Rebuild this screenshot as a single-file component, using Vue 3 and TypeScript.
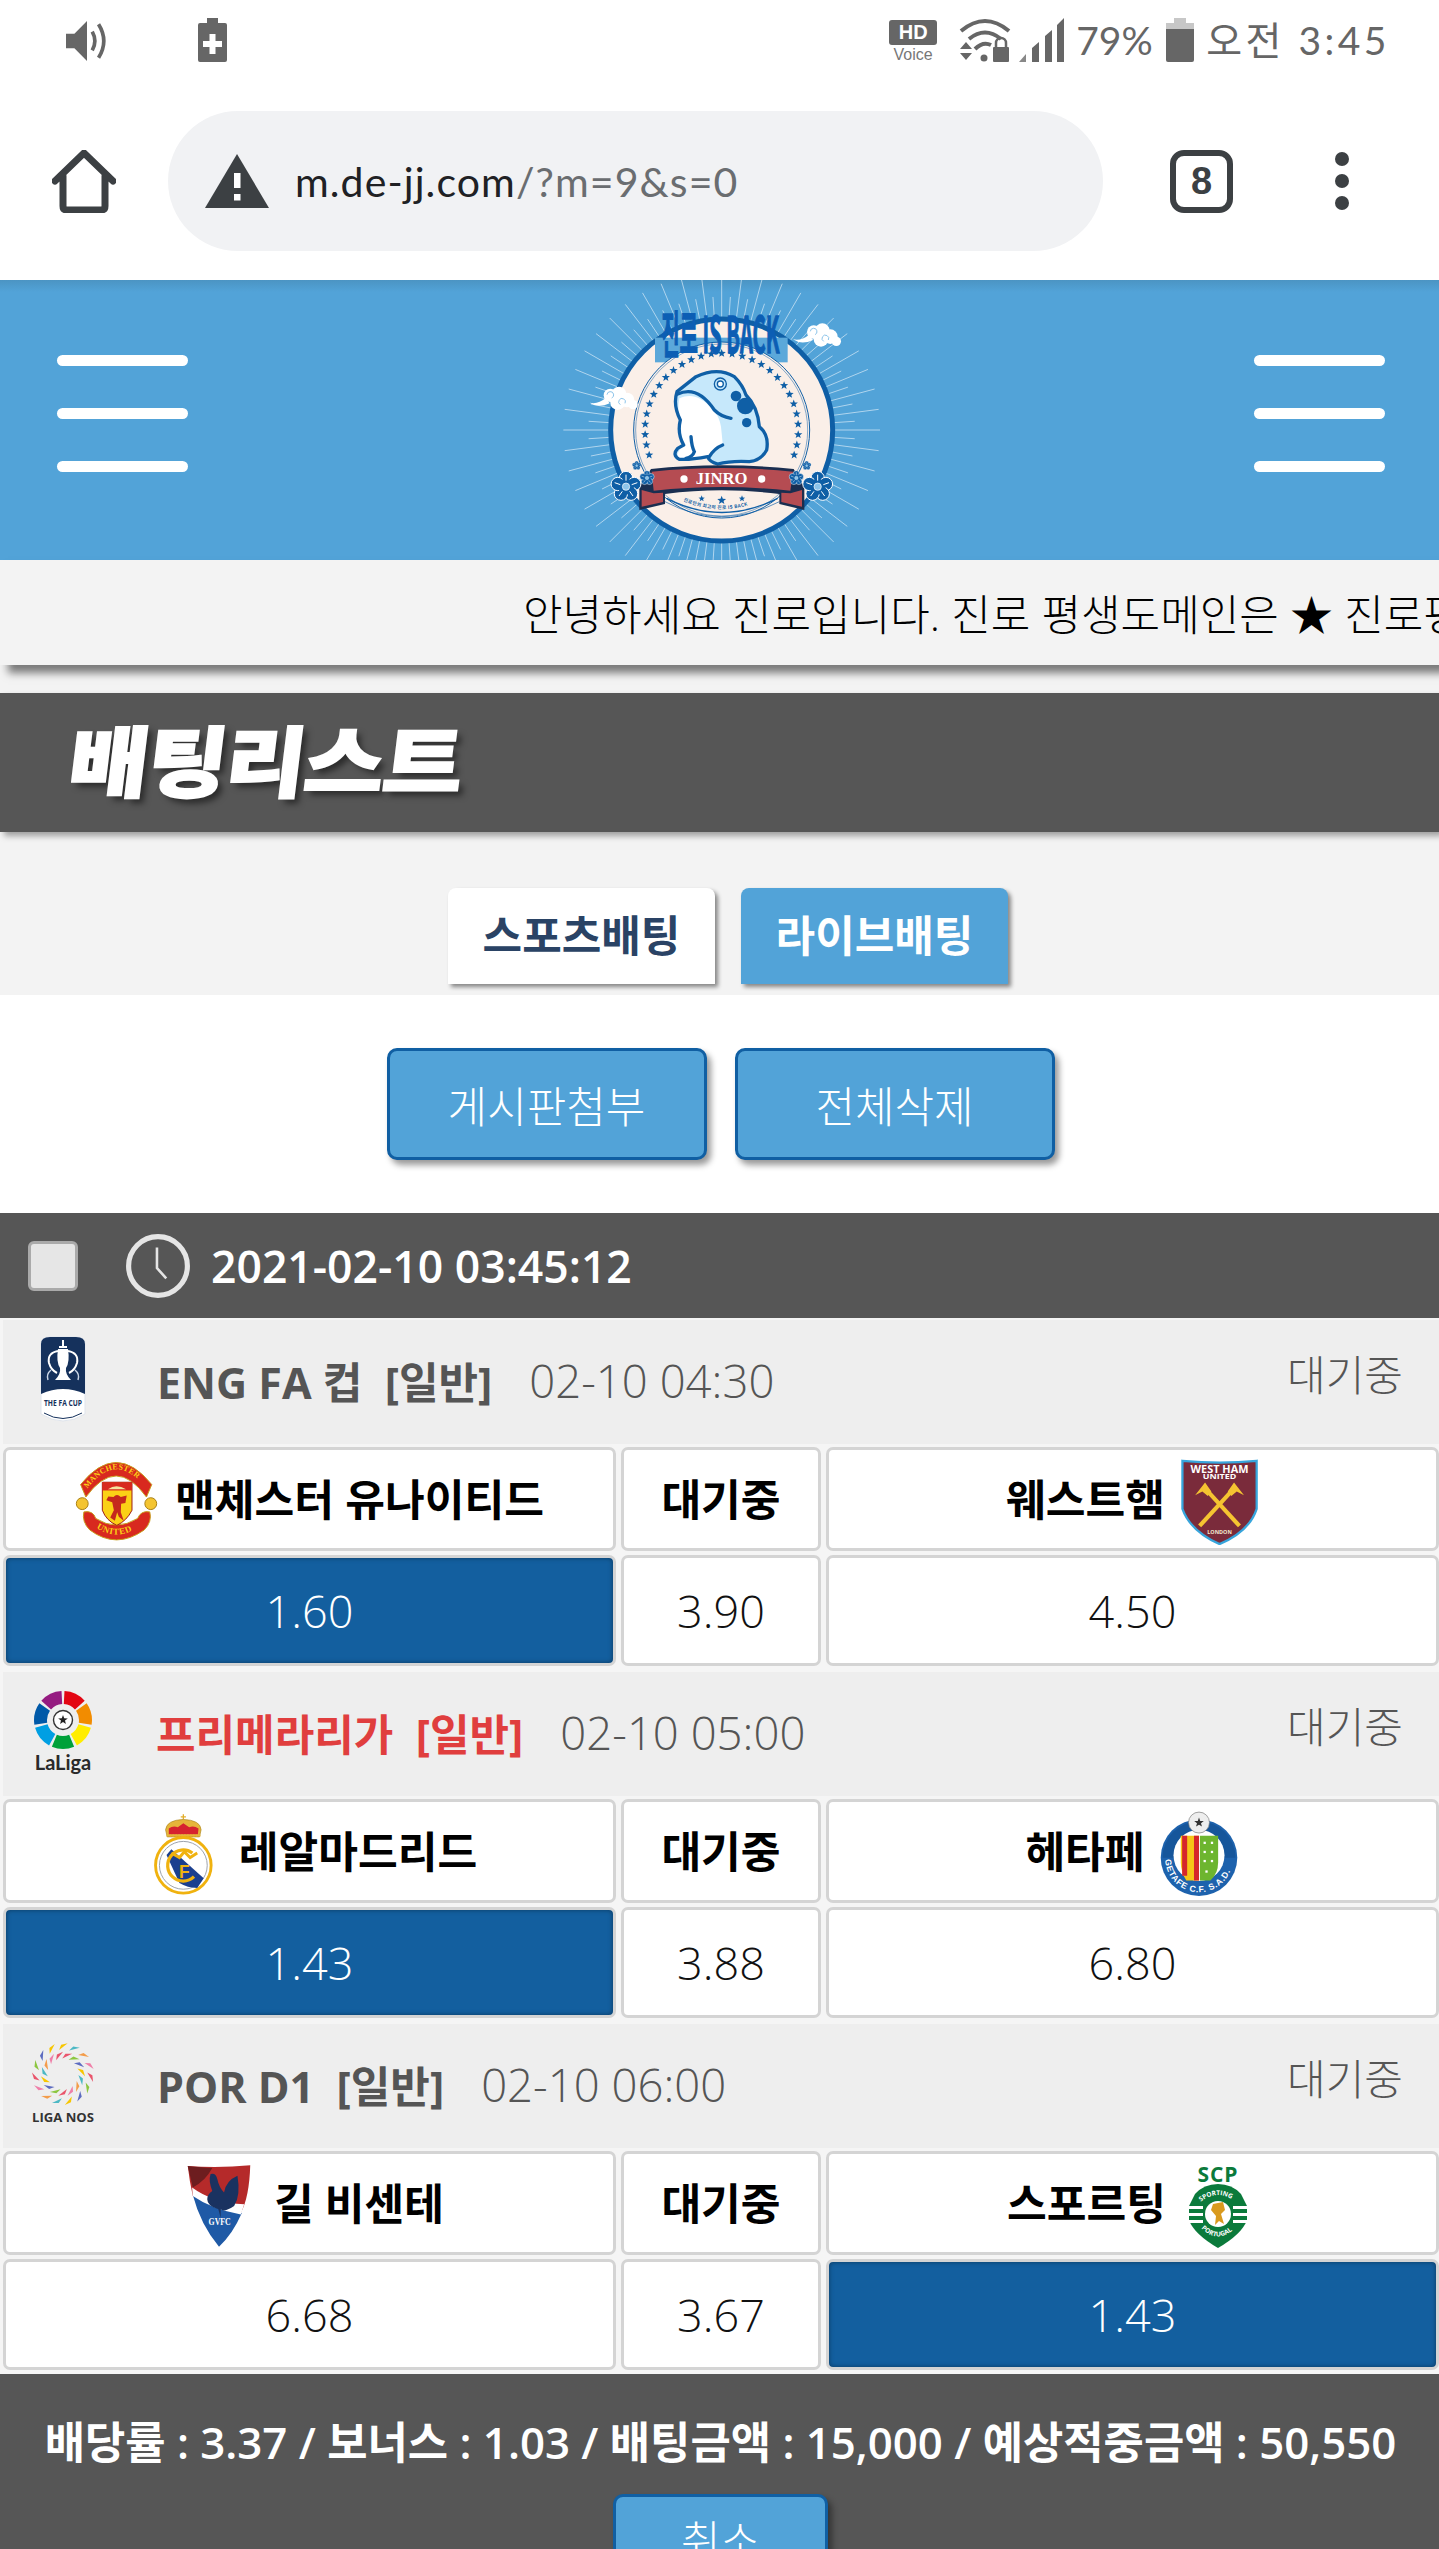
<script setup lang="ts">
interface Team { name: string; logo: string }
interface Match {
  icon: string
  league: string
  hot: boolean
  time: string
  home: Team
  away: Team
  odds: [string, string, string]
  picked: number
}

const matches: Match[] = [
  {
    icon: 'fa',
    league: 'ENG FA 컵',
    hot: false,
    time: '02-10 04:30',
    home: { name: '맨체스터 유나이티드', logo: 'mu' },
    away: { name: '웨스트햄', logo: 'wh' },
    odds: ['1.60', '3.90', '4.50'],
    picked: 0,
  },
  {
    icon: 'laliga',
    league: '프리메라리가',
    hot: true,
    time: '02-10 05:00',
    home: { name: '레알마드리드', logo: 'rm' },
    away: { name: '헤타페', logo: 'ge' },
    odds: ['1.43', '3.88', '6.80'],
    picked: 0,
  },
  {
    icon: 'nos',
    league: 'POR D1',
    hot: false,
    time: '02-10 06:00',
    home: { name: '길 비센테', logo: 'gv' },
    away: { name: '스포르팅', logo: 'sc' },
    odds: ['6.68', '3.67', '1.43'],
    picked: 2,
  },
]

function starPoints(cx: number, cy: number, r: number): string {
  const pts: string[] = []
  for (let i = 0; i < 10; i++) {
    const a = (i * Math.PI) / 5 - Math.PI / 2
    const d = i % 2 === 0 ? r : r * 0.42
    pts.push(`${(cx + d * Math.cos(a)).toFixed(1)},${(cy + d * Math.sin(a)).toFixed(1)}`)
  }
  return pts.join(' ')
}

const CX = 662
const CY = 480

const rays = Array.from({ length: 96 }, (_, i) => {
  const a = (i / 96) * Math.PI * 2
  const r2 = i % 2 === 0 ? 475 : 400
  return {
    x1: CX + 335 * Math.cos(a),
    y1: CY + 335 * Math.sin(a),
    x2: CX + r2 * Math.cos(a),
    y2: CY + r2 * Math.sin(a),
  }
})

const ringStars = Array.from({ length: 29 }, (_, i) => {
  const a = ((-109 + i * 7.786) * Math.PI) / 180
  return starPoints(CX + 230 * Math.sin(a), CY - 230 * Math.cos(a), 13)
})

const bottomStars = [starPoints(602, 686, 10), starPoints(662, 691, 14), starPoints(723, 686, 10)]

const petals = [0, 72, 144, 216, 288].map((d) => {
  const a = ((d - 90) * Math.PI) / 180
  return { x: 50 + 26 * Math.cos(a), y: 50 + 26 * Math.sin(a) }
})

const ligaColors = ['#e30613', '#f28c00', '#ffed00', '#00a13a', '#009fe3', '#0059a8', '#951b81']

const nosShards = Array.from({ length: 30 }, (_, i) => {
  const colors = ['#f7c600', '#e9546b', '#4cb8c4', '#8cc63f', '#f39c4a', '#5c6bc0', '#ef7fa8']
  const a = (i / 30) * Math.PI * 2 - Math.PI / 2
  const r = i % 2 === 0 ? 27 : 18
  const x = 33 + r * Math.cos(a)
  const y = 31 + r * Math.sin(a)
  const t = a + 0.9
  return {
    points: `${x + 6 * Math.cos(t)},${y + 6 * Math.sin(t)} ${x - 5 * Math.cos(t)},${y - 5 * Math.sin(t)} ${x + 3 * Math.sin(t)},${y - 3 * Math.cos(t)}`,
    fill: colors[i % 7],
  }
})
</script>

<template>
  <div class="page">
    <svg class="defs" aria-hidden="true">
      <defs>
        <symbol id="blossom" viewBox="0 0 100 100">
          <circle v-for="(p, i) in petals" :key="i" :cx="p.x" :cy="p.y" r="20" fill="#0f5fa6" stroke="#fff" stroke-width="3" />
          <circle cx="50" cy="50" r="24" fill="#0f5fa6" />
          <circle cx="50" cy="50" r="11" fill="#8cc4ea" stroke="#fff" stroke-width="2" />
          <g stroke="#fff" stroke-width="3">
            <line x1="50" y1="32" x2="50" y2="14" />
            <line x1="33" y1="44" x2="16" y2="38" />
            <line x1="67" y1="44" x2="84" y2="38" />
            <line x1="39" y1="64" x2="29" y2="78" />
            <line x1="61" y1="64" x2="71" y2="78" />
          </g>
        </symbol>

        <symbol id="cloud" viewBox="0 0 150 80">
          <g fill="#fff">
            <circle cx="62" cy="28" r="20" />
            <circle cx="88" cy="24" r="22" />
            <circle cx="112" cy="42" r="22" />
            <circle cx="130" cy="56" r="14" />
            <circle cx="84" cy="50" r="22" />
            <path d="M0 50 Q25 56 48 36 L60 52 Q25 68 0 50Z" />
          </g>
          <path d="M52 26 a10 10 0 1 1 14 10 M92 56 a10 10 0 1 1 14 -4" fill="none" stroke="#8cc4ea" stroke-width="3" />
        </symbol>

        <symbol id="fa" viewBox="0 0 46 86">
          <path d="M1 8 Q1 1 10 1 H36 Q45 1 45 8 V78 Q23 92 1 78Z" fill="#fff" stroke="#dfe4ec" />
          <path d="M1 8 Q1 1 10 1 H36 Q45 1 45 8 V58 Q23 48 1 58Z" fill="#15315c" />
          <path d="M23 4 V10 M19 11 H27" stroke="#fff" stroke-width="2" fill="none" />
          <path d="M18 13 H28 Q30 26 26 32 Q25 38 31 44 H15 Q21 38 20 32 Q16 26 18 13Z" fill="#fff" />
          <path d="M18 15 Q7 17 9 27 Q11 34 17 37 M28 15 Q39 17 37 27 Q35 34 29 37" fill="none" stroke="#fff" stroke-width="2" />
          <path d="M8 44 Q6 38 11 34 M38 44 Q40 38 35 34" fill="none" stroke="#c9d5e6" stroke-width="1.500" />
          <text x="23" y="70" text-anchor="middle" font-size="8" font-weight="700" font-family="Open Sans, sans-serif" fill="#15315c" textLength="38" lengthAdjust="spacingAndGlyphs">THE FA CUP</text>
          <path d="M4 77 Q23 88 42 77" fill="none" stroke="#15315c" stroke-width="1" />
        </symbol>

        <symbol id="laliga" viewBox="0 0 60 84">
          <g transform="rotate(-90 30 29)">
            <circle
              v-for="(c, i) in ligaColors"
              :key="c"
              cx="30"
              cy="29"
              r="22.500"
              fill="none"
              :stroke="c"
              stroke-width="13"
              pathLength="700"
              stroke-dasharray="88 612"
              :stroke-dashoffset="-i * 100 - 6"
            />
          </g>
          <circle cx="30" cy="29" r="9.500" fill="#fff" stroke="#333" stroke-width="1.400" />
          <polygon :points="starPoints(30, 29, 5)" fill="#222" />
          <text x="30" y="79" text-anchor="middle" font-size="20" font-weight="700" font-family="Lato, sans-serif" fill="#2a2a2a">LaLiga</text>
        </symbol>

        <symbol id="nos" viewBox="0 0 66 84">
          <polygon v-for="(s, i) in nosShards" :key="i" :points="s.points" :fill="s.fill" />
          <text x="33" y="79" text-anchor="middle" font-size="12" font-weight="700" font-family="Open Sans, sans-serif" fill="#333" textLength="62" lengthAdjust="spacingAndGlyphs">LIGA NOS</text>
        </symbol>

        <symbol id="mu" viewBox="55 35 255 260">
          <path d="M82 195 Q110 190 118 215 Q180 255 245 215 Q255 190 282 195 Q290 225 265 250 Q180 310 100 250 Q75 225 82 195Z" fill="#d8291f" stroke="#c79c1a" stroke-width="3" />
          <path d="M88 150 L72 112 Q180 -22 288 112 L272 150 Q180 22 88 150Z" fill="#d8291f" stroke="#c79c1a" stroke-width="3" />
          <circle cx="77" cy="170" r="18" fill="#f4c430" stroke="#a97f10" stroke-width="3" />
          <circle cx="285" cy="170" r="18" fill="#f4c430" stroke="#a97f10" stroke-width="3" />
          <path d="M138 105 H228 V190 Q212 222 182 236 Q150 222 138 190Z" fill="#fbd116" stroke="#9c1d14" stroke-width="3" />
          <path d="M138 105 H228 V130 H138Z" fill="#d8291f" />
          <path d="M155 126 Q180 108 210 126 Z" fill="#f4e3a0" />
          <path d="M172 150 Q182 138 194 150 L212 145 L208 168 L195 170 L194 196 L203 222 L188 210 L183 196 L176 222 L162 212 L173 190 L168 166 L150 160 L156 148Z" fill="#c5281d" />
          <path id="mu-arc-a" d="M88 130 Q180 2 276 130" fill="none" />
          <path id="mu-arc-b" d="M112 238 Q180 290 252 238" fill="none" />
          <text font-size="24" font-weight="700" font-family="Liberation Serif, serif" fill="#fbd116" letter-spacing="1"><textPath href="#mu-arc-a" startOffset="3%">MANCHESTER</textPath></text>
          <text font-size="27" font-weight="700" font-family="Liberation Serif, serif" fill="#fbd116" letter-spacing="2"><textPath href="#mu-arc-b" startOffset="6%">UNITED</textPath></text>
        </symbol>

        <symbol id="wh" viewBox="1000 360 170 190">
          <path d="M1002 364 Q1085 372 1166 364 V470 Q1150 520 1084 548 Q1020 520 1002 470Z" fill="#7a2b3b" stroke="#37a5dc" stroke-width="5" />
          <text x="1084" y="391" text-anchor="middle" font-size="22" font-weight="700" font-family="Open Sans, sans-serif" fill="#fff" textLength="128" lengthAdjust="spacingAndGlyphs">WEST HAM</text>
          <text x="1084" y="405" text-anchor="middle" font-size="16" font-weight="700" font-family="Open Sans, sans-serif" fill="#fff" textLength="74" lengthAdjust="spacingAndGlyphs">UNITED</text>
          <g stroke="#f5c431" stroke-width="9" fill="none">
            <line x1="1052" y1="425" x2="1128" y2="508" />
            <line x1="1116" y1="425" x2="1040" y2="508" />
          </g>
          <path d="M1030 440 L1052 412 L1066 432 L1058 442 L1046 432Z M1138 440 L1116 412 L1102 432 L1110 442 L1122 432Z" fill="#f5c431" />
          <text x="1084" y="525" text-anchor="middle" font-size="12" font-weight="700" font-family="Open Sans, sans-serif" fill="#f1e6d0">LONDON</text>
        </symbol>

        <symbol id="rm" viewBox="460 455 195 260">
          <path d="M557 462 V478 M549 470 H565" stroke="#e3ae2a" stroke-width="4" />
          <path d="M502 510 Q505 480 557 478 Q610 480 612 510 L607 532 H507Z" fill="#e6b53a" stroke="#a98218" stroke-width="2" />
          <path d="M512 506 Q525 496 540 502 L557 490 L575 502 Q590 496 604 506 L602 524 H512Z" fill="#d6232f" />
          <path d="M505 528 H610" stroke="#e6b53a" stroke-width="6" stroke-dasharray="6 3" />
          <circle cx="557" cy="620" r="86" fill="#fff" stroke="#f0b20f" stroke-width="9" />
          <circle cx="557" cy="620" r="74" fill="none" stroke="#9aa0aa" stroke-width="3" />
          <path d="M505 588 L520 570 L620 660 L600 690 Q570 690 545 675Z" fill="#1b3f8f" />
          <path d="M585 582 A48 48 0 1 0 590 655" fill="none" stroke="#f0b20f" stroke-width="10" />
          <path d="M520 582 L545 596 L560 578 L578 596 L600 582" fill="none" stroke="#f0b20f" stroke-width="9" />
          <text x="560" y="658" text-anchor="middle" font-size="54" font-weight="700" font-family="Liberation Sans, sans-serif" fill="#f0b20f">F</text>
        </symbol>

        <symbol id="ge" viewBox="950 1148 180 188">
          <circle cx="1040" cy="1250" r="84" fill="#1d62ad" />
          <path d="M960 1250 A80 80 0 0 1 1120 1250" fill="#0f4a8a" opacity=".5" />
          <circle cx="1040" cy="1245" r="56" fill="#fff" />
          <path d="M1000 1202 H1040 V1300 H1012 Q1000 1280 1000 1260Z" fill="#f5c518" />
          <path d="M1003 1202 H1014 V1290 H1003Z M1029 1202 H1040 V1300 H1029Z" fill="#d5262c" />
          <path d="M1042 1202 H1082 V1260 Q1082 1285 1065 1300 H1042Z" fill="#6db52f" />
          <g fill="#fff"><rect x="1050" y="1215" width="5" height="5" /><rect x="1066" y="1215" width="5" height="5" /><rect x="1050" y="1235" width="5" height="5" /><rect x="1066" y="1235" width="5" height="5" /><rect x="1050" y="1255" width="5" height="5" /><rect x="1066" y="1255" width="5" height="5" /><rect x="1054" y="1278" width="5" height="5" /></g>
          <circle cx="1040" cy="1173" r="23" fill="#eee" stroke="#777" stroke-width="1.500" />
          <polygon :points="starPoints(1040, 1173, 11)" fill="#333" />
          <path id="ge-arc" d="M966 1252 A74 74 0 0 0 1114 1252" fill="none" />
          <text font-size="19" font-weight="700" font-family="Liberation Sans, sans-serif" fill="#fff" letter-spacing="1.500"><textPath href="#ge-arc" startOffset="1%">GETAFE C.F. S.A.D.</textPath></text>
        </symbol>

        <symbol id="gv" viewBox="55 80 190 250">
          <path d="M57 86 Q150 92 243 84 Q240 180 215 225 L72 175 Q62 130 57 86Z" fill="#b52a2a" />
          <path d="M57 86 Q100 90 130 92 Q110 130 72 150Z" fill="#6d1d1f" />
          <path d="M72 172 Q140 205 218 226 Q190 290 150 326 Q95 260 72 172Z" fill="#1f5aa6" />
          <path d="M70 150 Q130 195 225 200 L215 230 Q130 215 72 175Z" fill="#fff" />
          <path d="M125 110 Q140 105 145 125 Q150 150 165 165 Q170 130 205 115 Q215 175 195 205 Q165 225 155 215 L155 240 L148 215 Q115 205 115 185 Q115 170 130 160 Q118 130 125 110Z" fill="#1a3260" />
          <text x="152" y="262" text-anchor="middle" font-size="30" font-family="Liberation Serif, serif" fill="#fff" textLength="66" lengthAdjust="spacingAndGlyphs">GVFC</text>
        </symbol>

        <symbol id="sc" viewBox="0 0 64 84">
          <text x="32" y="18" text-anchor="middle" font-size="21" font-weight="700" font-family="Open Sans, sans-serif" fill="#0b7a3b" letter-spacing="1">SCP</text>
          <path d="M32 20 Q46 20 55 30 L61 42 V56 Q56 70 32 84 Q8 70 3 56 V42 L9 30 Q18 20 32 20Z" fill="#0b7a3b" />
          <circle cx="32" cy="50" r="13" fill="#fff" />
          <g fill="#fff"><rect x="3" y="42" width="14" height="3" /><rect x="3" y="49" width="14" height="3" /><rect x="3" y="56" width="14" height="3" /><rect x="47" y="42" width="14" height="3" /><rect x="47" y="49" width="14" height="3" /><rect x="47" y="56" width="14" height="3" /></g>
          <path d="M27 40 L37 38 L39 46 L35 50 L38 60 L33 57 L29 61 L30 52 L25 46Z" fill="#d99a1e" />
          <path id="sc-top" d="M12 40 Q32 22 52 40" fill="none" />
          <path id="sc-bot" d="M14 63 Q32 82 50 63" fill="none" />
          <text font-size="6.500" font-weight="700" font-family="Open Sans, sans-serif" fill="#fff"><textPath href="#sc-top" startOffset="8%">SPORTING</textPath></text>
          <text font-size="6.500" font-weight="700" font-family="Open Sans, sans-serif" fill="#fff"><textPath href="#sc-bot" startOffset="4%">PORTUGAL</textPath></text>
        </symbol>
      </defs>
    </svg>

    <div class="status">
      <div class="status-left">
        <svg class="ic-speaker" viewBox="0 0 40 38">
          <path d="M0 12 H8 L20 0 V38 L8 26 H0Z" fill="#666" />
          <path d="M25 10 Q30 19 25 28 M31 3 Q41 19 31 35" fill="none" stroke="#666" stroke-width="3.500" />
        </svg>
        <svg class="ic-saver" viewBox="0 0 29 44">
          <path d="M9 0 H20 V5 H27 Q29 5 29 7 V42 Q29 44 27 44 H2 Q0 44 0 42 V7 Q0 5 2 5 H9Z" fill="#666" />
          <path d="M11.500 16 H17.500 V23 H24 V29 H17.500 V36 H11.500 V29 H5 V23 H11.500Z" fill="#fff" />
        </svg>
      </div>
      <div class="status-right">
        <div class="hd">
          <span class="hd-box">HD</span>
          <span class="hd-voice">Voice</span>
        </div>
        <svg class="ic-wifi" viewBox="0 0 52 44">
          <g fill="none" stroke="#666" stroke-width="4">
            <path d="M2 13 Q26 -7 50 13" />
            <path d="M10 21 Q26 8 42 21" />
            <path d="M16 31 Q24 23 32 27" />
          </g>
          <circle cx="25" cy="40" r="3.500" fill="#666" />
          <path d="M1 31 L7 24 L13 31Z M1 35 H13 L7 42Z" fill="#666" />
          <rect x="34" y="29" width="16" height="15" rx="1" fill="#666" />
          <path d="M37 30 V25 A5 5 0 0 1 47 25 V30" fill="none" stroke="#666" stroke-width="2.500" />
        </svg>
        <svg class="ic-signal" viewBox="0 0 45 44">
          <path d="M0 44 L7 36 V44Z" fill="#888" />
          <path d="M13 44 V30 L20 24 V44Z M26 44 V18 L33 12 V44Z M38 44 V7 L45 0 V44Z" fill="#666" />
        </svg>
        <span class="pct">79%</span>
        <svg class="ic-batt" viewBox="0 0 28 44">
          <path d="M8 0 H20 V5 H28 V11 H0 V5 H8Z" fill="#c7c7c7" />
          <path d="M0 11 H28 V42 Q28 44 26 44 H2 Q0 44 0 42Z" fill="#666" />
        </svg>
        <span class="clock-text">오전 3:45</span>
      </div>
    </div>

    <div class="toolbar">
      <svg class="ic-home" viewBox="0 0 64 63">
        <path d="M3 31 L32 3 L61 31 M11 26 V56 Q11 60 15 60 H49 Q53 60 53 56 V26" fill="none" stroke="#3c4043" stroke-width="7" stroke-linecap="round" stroke-linejoin="round" />
      </svg>
      <div class="url-pill">
        <svg class="ic-warn" viewBox="0 0 64 54">
          <path d="M32 0 L64 54 H0Z" fill="#3c4043" />
          <rect x="29" y="19" width="6.500" height="15" fill="#fff" />
          <rect x="29" y="40" width="6.500" height="6.500" fill="#fff" />
        </svg>
        <span class="url"><b>m.de-jj.com</b>/?m=9&amp;s=0</span>
      </div>
      <div class="tabs-count">8</div>
      <div class="dots"><i></i><i></i><i></i></div>
    </div>

    <header class="site-head">
      <div class="burger"><i></i><i></i><i></i></div>
      <svg class="brand" viewBox="0 30 1320 840">
        <g stroke="#cfe6f6" stroke-width="3" opacity=".75">
          <line v-for="(r, i) in rays" :key="i" :x1="r.x1" :y1="r.y1" :x2="r.x2" :y2="r.y2" />
        </g>
        <circle :cx="CX" :cy="CY" r="333" fill="#faefe8" stroke="#0f5fa6" stroke-width="15" />
        <rect x="462" y="203" width="398" height="74" fill="#5ba8da" />
        <circle :cx="CX" :cy="CY" r="264" fill="#faefe8" stroke="#0f5fa6" stroke-width="3" />
        <circle :cx="CX" :cy="CY" r="258" fill="none" stroke="#0f5fa6" stroke-width="1.500" />
        <polygon v-for="(s, i) in ringStars" :key="i" :points="s" fill="#0f5fa6" />
        <path d="M585 320 Q650 290 700 320 Q725 345 735 375 Q770 410 775 470 Q805 495 797 540 Q780 572 745 575 Q690 572 650 582 Q625 575 620 560 Q570 570 535 568 Q512 555 530 535 L548 525 Q528 490 538 450 Q515 405 528 365Z" fill="#c6e8fb" />
        <path d="M535 385 Q590 360 640 425 Q655 440 660 470 L665 520 Q640 545 625 560 Q570 565 535 565 Q520 555 548 525 Q528 490 538 450 Q528 420 535 385Z" fill="#fff" />
        <path d="M530 372 Q590 345 640 420 Q660 440 690 445 M570 500 Q572 530 580 545 Q575 560 555 565 M665 525 Q640 535 625 560" fill="none" stroke="#0f5fa6" stroke-width="10" stroke-linecap="round" />
        <path d="M585 320 Q650 290 700 320 Q725 345 735 375 Q770 410 775 470 Q805 495 797 540 Q780 572 745 575 Q690 572 650 582 Q625 575 620 560 Q570 570 535 568 Q512 555 530 535 L548 525 Q528 490 538 450 Q515 405 528 365Z" fill="none" stroke="#0f5fa6" stroke-width="10" stroke-linejoin="round" />
        <circle cx="705" cy="378" r="16" fill="#0f5fa6" />
        <circle cx="733" cy="408" r="25" fill="#0f5fa6" />
        <circle cx="737" cy="458" r="14" fill="#0f5fa6" />
        <circle cx="658" cy="342" r="18" fill="#c6e8fb" stroke="#0f5fa6" stroke-width="4" />
        <circle cx="658" cy="342" r="9" fill="#fff" stroke="#0f5fa6" stroke-width="4" />
        <path d="M497 685 Q662 770 830 685" fill="none" stroke="#0f5fa6" stroke-width="4" />
        <path d="M492 695 Q662 785 835 695" fill="none" stroke="#0f5fa6" stroke-width="2" />
        <polygon v-for="(s, i) in bottomStars" :key="'b' + i" :points="s" fill="#0f5fa6" />
        <path id="tag-arc" d="M540 690 Q662 745 785 690" fill="none" />
        <text font-size="14" font-weight="700" font-family="Noto Sans CJK KR, sans-serif" fill="#0f5fa6" letter-spacing="1"><textPath href="#tag-arc" startOffset="3%">진로만의 최고의 진로 IS BACK</textPath></text>
        <path d="M450 597 L415 650 V720 L492 702 V672 Q662 650 835 672 V702 L910 720 V650 L878 597 Q662 575 450 597Z" fill="#1a2e50" />
        <path d="M452 605 Q662 583 876 605 L868 662 Q662 640 458 662Z M422 660 L458 670 L486 668 V696 L422 710Z M868 670 L903 660 V710 L841 696 V668Z" fill="#b54c52" />
        <circle cx="549" cy="627" r="11" fill="#fff" />
        <circle cx="782" cy="627" r="11" fill="#fff" />
        <text x="662" y="642" text-anchor="middle" font-size="50" font-weight="700" font-family="Liberation Serif, serif" fill="#fff">JINRO</text>
        <use href="#blossom" x="325" y="600" width="100" height="100" />
        <use href="#blossom" x="900" y="600" width="100" height="100" />
        <use href="#blossom" x="414" y="600" width="48" height="48" />
        <use href="#blossom" x="862" y="600" width="48" height="48" />
        <use href="#blossom" x="392" y="572" width="30" height="30" />
        <use href="#blossom" x="902" y="572" width="30" height="30" />
        <use href="#cloud" x="266" y="348" width="150" height="80" />
        <use href="#cloud" x="876" y="158" width="150" height="80" />
        <text x="658" y="248" text-anchor="middle" font-size="150" font-weight="700" font-family="Noto Sans CJK KR, sans-serif" fill="#0c5eb4" stroke="#0c5eb4" stroke-width="4" textLength="355" lengthAdjust="spacingAndGlyphs">진로 IS BACK</text>
      </svg>
      <div class="burger"><i></i><i></i><i></i></div>
    </header>

    <div class="notice"><span>안녕하세요 진로입니다. 진로 평생도메인은 ★ 진로평생도메인</span></div>

    <section class="title-area">
      <div class="title-bar"><h1>배팅리스트</h1></div>
      <div class="tabs">
        <a class="tab on">스포츠배팅</a>
        <a class="tab live">라이브배팅</a>
      </div>
    </section>

    <div class="actions">
      <button class="btn">게시판첨부</button>
      <button class="btn">전체삭제</button>
    </div>

    <div class="list-head">
      <span class="check"></span>
      <svg class="ic-clock" viewBox="0 0 64 64">
        <circle cx="32" cy="32" r="28.500" fill="none" stroke="#e5e5e5" stroke-width="5" />
        <path d="M31 14 V34 L40 44" fill="none" stroke="#e5e5e5" stroke-width="2.500" />
      </svg>
      <span class="now">2021-02-10 03:45:12</span>
    </div>

    <div class="list">
      <article v-for="m in matches" :key="m.league" class="match">
        <div class="league">
          <svg class="lg-icon" :class="'lg-' + m.icon"><use :href="'#' + m.icon" /></svg>
          <strong :class="{ hot: m.hot }">{{ m.league }}&nbsp;&nbsp;[일반]</strong>
          <span class="time">{{ m.time }}</span>
          <span class="state">대기중</span>
        </div>
        <div class="row team-row">
          <div class="cell team">
            <svg class="crest" :class="'c-' + m.home.logo"><use :href="'#' + m.home.logo" /></svg>
            <span class="tname">{{ m.home.name }}</span>
          </div>
          <div class="cell team"><span class="tname">대기중</span></div>
          <div class="cell team">
            <span class="tname">{{ m.away.name }}</span>
            <svg class="crest" :class="'c-' + m.away.logo"><use :href="'#' + m.away.logo" /></svg>
          </div>
        </div>
        <div class="row odds-row">
          <div v-for="(o, i) in m.odds" :key="i" class="cell odd" :class="{ picked: m.picked === i }">{{ o }}</div>
        </div>
      </article>
    </div>

    <footer class="summary">
      <p>배당률 : 3.37 / 보너스 : 1.03 / 배팅금액 : 15,000 / 예상적중금액 : 50,550</p>
      <button class="btn cancel">취소</button>
    </footer>
  </div>
</template>

<style>
html,
body {
  margin: 0;
  background: #fff;
}
</style>

<style scoped>
.page {
  width: 1439px;
  height: 2549px;
  overflow: hidden;
  background: #fff;
  font-family: "Open Sans", "Noto Sans CJK KR", sans-serif;
  color: #000;
}
.defs {
  position: absolute;
  width: 0;
  height: 0;
  overflow: hidden;
}
.status {
  height: 90px;
  display: flex;
  justify-content: space-between;
  align-items: flex-start;
  padding: 18px 49px 0 66px;
  box-sizing: border-box;
  color: #666;
}
.status-left {
  display: flex;
  align-items: flex-start;
  gap: 90px;
}
.ic-speaker {
  width: 42px;
  height: 40px;
  margin-top: 3px;
}
.ic-saver {
  width: 29px;
  height: 44px;
}
.status-right {
  display: flex;
  align-items: flex-start;
}
.hd {
  width: 48px;
  margin-top: 2px;
  display: flex;
  flex-direction: column;
  align-items: center;
}
.hd-box {
  width: 48px;
  height: 25px;
  background: #666;
  color: #fff;
  border-radius: 3px;
  font: 700 20px/25px "Liberation Sans", sans-serif;
  text-align: center;
}
.hd-voice {
  font: 400 16px/20px "Liberation Sans", sans-serif;
  color: #777;
}
.ic-wifi {
  width: 52px;
  height: 44px;
  margin-left: 22px;
}
.ic-signal {
  width: 45px;
  height: 44px;
  margin-left: 8px;
}
.pct {
  margin-left: 12px;
  font: 400 39px/44px "Lato", sans-serif;
  width: 78px;
}
.ic-batt {
  width: 28px;
  height: 44px;
  margin-left: 12px;
}
.clock-text {
  margin-left: 12px;
  font: 400 39px/44px "Lato", "Noto Sans CJK KR", sans-serif;
  white-space: nowrap;
  letter-spacing: 3.500px;
}
.toolbar {
  height: 190px;
  display: flex;
  align-items: center;
  padding: 0 0 8px 52px;
  box-sizing: border-box;
  position: relative;
}
.ic-home {
  width: 64px;
  height: 63px;
}
.url-pill {
  width: 935px;
  height: 140px;
  margin-left: 52px;
  border-radius: 70px;
  background: #f1f2f4;
  display: flex;
  align-items: center;
  padding-left: 37px;
  box-sizing: border-box;
}
.ic-warn {
  width: 64px;
  height: 54px;
}
.url {
  margin-left: 26px;
  font: 400 41px/1 "Lato", sans-serif;
  letter-spacing: 1.100px;
  color: #6a6d70;
}
.url b {
  font-weight: 400;
  color: #202124;
}
.tabs-count {
  width: 63px;
  height: 63px;
  margin-left: 67px;
  border: 6px solid #3c4043;
  border-radius: 14px;
  box-sizing: border-box;
  display: flex;
  align-items: center;
  justify-content: center;
  font: 700 38px/1 "Liberation Sans", sans-serif;
  color: #3c4043;
}
.dots {
  margin-left: 102px;
  display: flex;
  flex-direction: column;
  gap: 8px;
}
.dots i {
  width: 14px;
  height: 14px;
  border-radius: 50%;
  background: #3c4043;
}
.site-head {
  height: 280px;
  display: flex;
  align-items: center;
  justify-content: space-between;
  background: linear-gradient(#4b94c3 0, #52a3d8 12px);
  padding: 0 54px 0 57px;
  box-sizing: border-box;
}
.burger {
  width: 131px;
  display: flex;
  flex-direction: column;
  gap: 42px;
  margin-bottom: 13px;
}
.burger i {
  height: 11px;
  border-radius: 6px;
  background: #fff;
}
.brand {
  width: 440px;
  height: 280px;
}
.notice {
  height: 105px;
  background: #f3f3f3;
  padding-left: 523px;
  box-sizing: border-box;
  display: flex;
  align-items: center;
  overflow: hidden;
  box-shadow: 8px 8px 8px rgba(0, 0, 0, 0.5);
  position: relative;
  font-size: 43px;
  white-space: nowrap;
  font-weight: 300;
}
.title-area {
  background: #f3f3f3;
  height: 330px;
  padding-top: 28px;
  box-sizing: border-box;
}
.title-bar {
  height: 139px;
  background: #565656;
  box-shadow: 4px 4px 6px rgba(0, 0, 0, 0.35);
  display: flex;
  align-items: center;
  padding-left: 70px;
}
.title-bar h1 {
  margin: -11px 0 0;
  font: 900 77px/1 "Noto Sans CJK KR", sans-serif;
  color: #fff;
  transform-origin: left center;
  transform: skewX(-7deg) scaleX(1.125);
  -webkit-text-stroke: 2px #fff;
  text-shadow: 5px 5px 6px rgba(0, 0, 0, 0.5);
  letter-spacing: -1px;
}
.tabs {
  display: flex;
  justify-content: center;
  gap: 26px;
  margin-top: 56px;
  padding-left: 17px;
}
.tab {
  width: 267px;
  height: 96px;
  padding-bottom: 6px;
  border-radius: 8px 8px 0 0;
  box-sizing: border-box;
  display: flex;
  align-items: center;
  justify-content: center;
  font-weight: 700;
  font-size: 43px;
  box-shadow: 3px 3px 4px rgba(0, 0, 0, 0.45);
}
.tab.on {
  background: #fff;
  color: #2a4365;
}
.tab.live {
  background: #52a3d8;
  color: #fff;
}
.actions {
  height: 218px;
  display: flex;
  justify-content: center;
  gap: 28px;
  padding: 53px 0 0 2px;
  box-sizing: border-box;
}
.btn {
  width: 320px;
  height: 112px;
  background: #52a3d8;
  border: 3px solid #105fa3;
  border-radius: 10px;
  color: #fff;
  font-family: inherit;
  font-size: 43px;
  font-weight: 300;
  box-shadow: 4px 5px 6px rgba(0, 0, 0, 0.4);
  padding: 0;
}
.list-head {
  height: 105px;
  background: #565656;
  display: flex;
  align-items: center;
  padding-left: 28px;
  color: #fff;
}
.check {
  width: 50px;
  height: 50px;
  box-sizing: border-box;
  background: #e6e6e6;
  border: 3px solid #aaa;
  border-radius: 6px;
}
.ic-clock {
  width: 66px;
  height: 66px;
  margin-left: 47px;
}
.now {
  margin-left: 20px;
  font-size: 44.500px;
  font-weight: 600;
}
.list {
  background: #f5f5f5;
  padding-top: 2px;
  height: 1056px;
  box-sizing: border-box;
}
.match {
  height: 352px;
}
.league {
  height: 124px;
  margin-left: 3px;
  background: #eee;
  position: relative;
  display: flex;
  align-items: center;
  padding-bottom: 4px;
  box-sizing: border-box;
  font-size: 43px;
  color: #555;
  white-space: nowrap;
}
.lg-icon {
  flex: none;
}
.lg-fa {
  width: 46px;
  height: 86px;
  margin: -2px 0 0 37px;
}
.lg-laliga {
  width: 60px;
  height: 84px;
  margin: 2px 0 0 30px;
}
.lg-nos {
  width: 66px;
  height: 84px;
  margin: 2px 0 0 27px;
}
.lg-fa + strong {
  margin-left: 71px;
}
.lg-laliga + strong {
  margin-left: 63px;
}
.lg-nos + strong {
  margin-left: 61px;
}
.league strong {
  font-weight: 700;
}
.league strong.hot {
  color: #e03e3e;
}
.time {
  margin-left: 37px;
  font-size: 45.500px;
  font-weight: 300;
  color: #555;
}
.state {
  position: absolute;
  right: 36px;
  top: 22px;
  font-size: 42px;
  font-weight: 300;
  color: #555;
}
.row {
  display: grid;
  grid-template-columns: 613px 200px 613px;
  column-gap: 5px;
  padding-left: 3px;
}
.team-row {
  height: 104px;
  margin-top: 3px;
}
.odds-row {
  height: 111px;
  margin-top: 4px;
}
.cell {
  background: #fff;
  border: 3px solid #d4d4d4;
  border-radius: 7px;
  box-sizing: border-box;
  display: flex;
  align-items: center;
  justify-content: center;
}
.team {
  font-weight: 700;
  font-size: 43.200px;
  gap: 16px;
}
.tname {
  margin-bottom: 4px;
}
.crest {
  flex: none;
  margin-top: 5px;
}
.c-mu {
  width: 84px;
  height: 86px;
}
.c-wh {
  width: 78px;
  height: 86px;
}
.c-rm {
  width: 63px;
  height: 86px;
  margin-left: 10px;
  margin-right: 8px;
}
.c-ge {
  width: 82px;
  height: 86px;
  margin-left: -3px;
}
.c-gv {
  width: 64px;
  height: 84px;
  margin-left: 12px;
  margin-right: 7px;
}
.c-sc {
  width: 64px;
  height: 84px;
  margin-left: 4px;
  margin-right: 8px;
}
.odd {
  font-size: 45px;
  font-weight: 300;
  color: #111;
}
.odd.picked {
  background: #135f9f;
  color: #fff;
  box-shadow: inset 0 0 5px rgba(0, 0, 0, 0.4);
}
.summary {
  height: 175px;
  background: #565656;
  padding: 4px 0 0 2px;
  box-sizing: border-box;
  text-align: center;
  color: #fff;
}
.summary p {
  margin: 35px 0 0;
  font-size: 43.800px;
  line-height: 58px;
  font-weight: 600;
  white-space: nowrap;
}
.cancel {
  display: block;
  width: 215px;
  margin: 23px auto 0;
  padding-bottom: 24px;
}
</style>
